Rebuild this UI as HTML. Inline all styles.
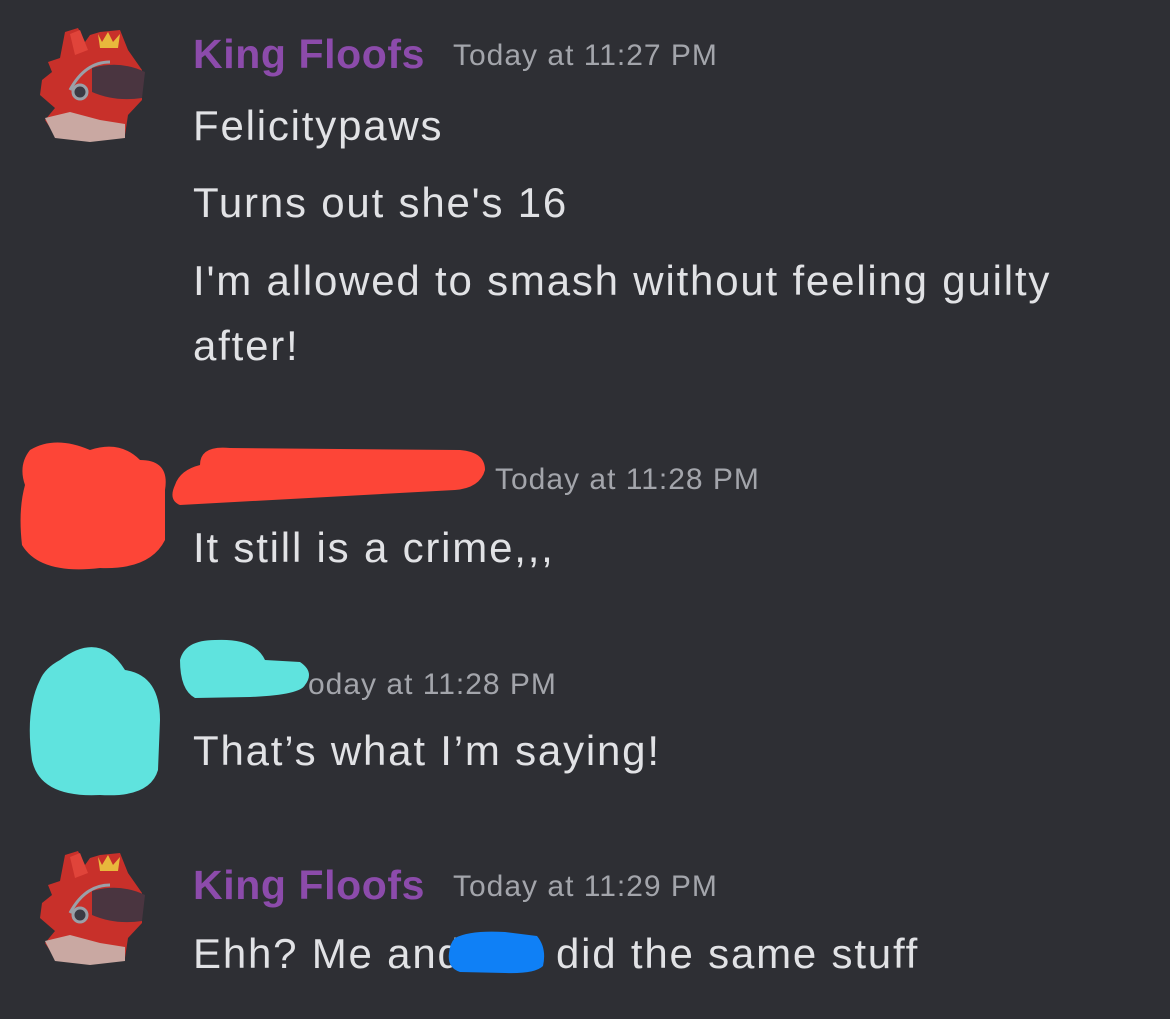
<!DOCTYPE html>
<html><head><meta charset="utf-8"><style>
html,body{margin:0;padding:0;width:1170px;height:1019px;background:#2e2f34;overflow:hidden}
.t{position:absolute;font-family:"Liberation Sans",sans-serif;white-space:nowrap;line-height:1}
.n{color:#8c4bab;font-size:41px;font-weight:bold;letter-spacing:0.6px}
.s{color:#a3a5ab;font-size:30px;letter-spacing:1px}
.m{color:#e1e2e5;font-size:42px;letter-spacing:1.8px}
svg{position:absolute}
</style></head><body>
<svg width="0" height="0"><defs>
<g id="av">
<path d="M12 60 L22 52 L18 42 L30 38 L35 12 L48 8 L55 22 L60 15 L70 12 L90 10 L98 30 L112 50 L112 80 L98 95 L95 115 L60 118 L25 115 L15 100 L25 88 L10 75 Z" fill="#c8302a"/>
<path d="M40 14 L50 10 L58 30 L45 35 Z" fill="#e0443a"/>
<path d="M15 98 L40 92 L70 100 L95 104 L95 118 L60 122 L25 118 Z" fill="#c9a8a2"/>
<path d="M62 48 Q90 40 115 52 L112 78 Q85 82 62 72 Z" fill="#4a3540"/>
<path d="M68 14 L72 22 L78 12 L83 22 L90 14 L88 28 L70 28 Z" fill="#e8b83c"/>
<path d="M40 70 Q55 42 80 42" stroke="#9aa0a8" stroke-width="3" fill="none"/>
<circle cx="50" cy="72" r="7" fill="#3a3a44" stroke="#9aa0a8" stroke-width="3"/>
</g></defs></svg>
<svg style="left:30px;top:20px" width="140" height="140" viewBox="0 0 140 140"><use href="#av"/></svg>
<svg style="left:30px;top:843px" width="140" height="140" viewBox="0 0 140 140"><use href="#av"/></svg>

<div class="t n" style="left:193px;top:34px">King Floofs</div>
<div class="t s" style="left:453px;top:41px">Today at 11:27 PM</div>
<div class="t m" style="left:193px;top:105px">Felicitypaws</div>
<div class="t m" style="left:193px;top:182px">Turns out she's 16</div>
<div class="t m" style="left:193px;top:260px">I'm allowed to smash without feeling guilty</div>
<div class="t m" style="left:193px;top:325px">after!</div>

<svg style="left:0;top:430px" width="500" height="150">
<path d="M30 20 Q55 5 90 20 Q120 10 140 30 Q170 30 165 60 L165 110 Q150 140 100 138 Q40 145 22 115 Q18 80 25 55 Q18 35 30 20Z" fill="#fd4537"/>
<path d="M175 55 Q180 40 200 35 Q200 15 230 18 L460 20 Q485 22 485 40 Q480 58 455 60 L180 75 Q168 70 175 55Z" fill="#fd4537"/>
</svg>
<div class="t s" style="left:495px;top:465px">Today at 11:28 PM</div>
<div class="t m" style="left:193px;top:527px">It still is a crime,,,</div>

<svg style="left:0;top:630px" width="320" height="180">
<path d="M60 30 Q100 0 125 40 Q160 45 160 90 L158 140 Q150 168 100 165 Q40 168 32 130 Q25 80 40 50 Q45 38 60 30Z" fill="#5fe3de"/>
<path d="M180 30 Q185 10 215 10 Q255 8 265 30 L300 32 Q315 42 305 55 Q300 65 250 67 L195 68 Q180 60 180 30Z" fill="#5fe3de"/>
</svg>
<div class="t s" style="left:308px;top:670px">oday at 11:28 PM</div>
<div class="t m" style="left:193px;top:730px">That’s what I’m saying!</div>

<div class="t n" style="left:193px;top:865px">King Floofs</div>
<div class="t s" style="left:453px;top:872px">Today at 11:29 PM</div>
<div class="t m" style="left:193px;top:933px">Ehh? Me and</div>
<svg style="left:445px;top:928px" width="105" height="50"><path d="M10 10 Q25 2 60 4 L92 8 Q102 20 98 38 Q90 46 60 45 L15 44 Q2 40 4 25 Q5 15 10 10Z" fill="#0f80f6"/></svg>
<div class="t m" style="left:556px;top:933px">did the same stuff</div>
</body></html>
